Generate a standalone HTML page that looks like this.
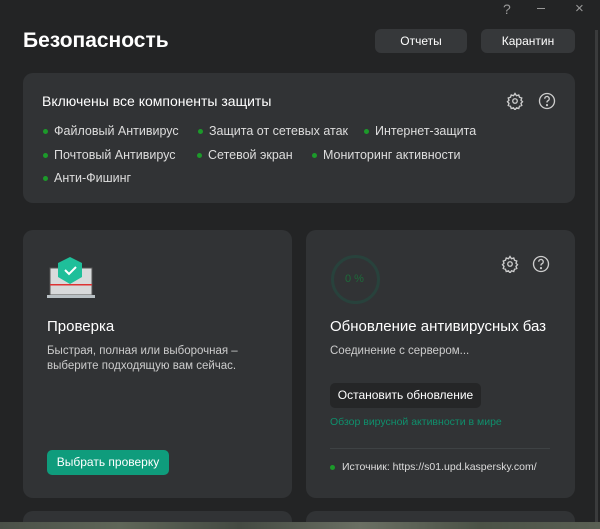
<!DOCTYPE html><html style="width:600px;height:529px;overflow:hidden"><head><meta charset="utf-8"><style>
body{margin:0;width:600px;height:529px;background:#232425;font-family:"Liberation Sans",sans-serif;color:#e8e8e8;position:relative;overflow:hidden}
.a{position:absolute}
.card{position:absolute;background:#313335;border-radius:10px}
.btn{position:absolute;background:#36383a;border-radius:6px;font-size:12px;color:#fff;text-align:center;line-height:24px}
.it{position:absolute;font-size:12.5px;color:#ddd}
.it:before{content:"";position:absolute;left:-11px;top:5px;width:5px;height:5px;border-radius:50%;background:#1c9a2a}
</style></head><body>
<div class="a" style="left:503px;top:1px;font-size:14px;color:#999">?</div>
<div class="a" style="left:537px;top:8px;width:8px;height:1px;background:#999"></div>
<div class="a" style="left:575px;top:0px;font-size:15px;color:#999">×</div>
<div class="a" style="left:595px;top:30px;width:3px;height:499px;background:#3a3b3c"></div>
<div class="a" style="left:23px;top:29px;font-size:21px;font-weight:bold;color:#fff">Безопасность</div>
<div class="btn" style="left:375px;top:29px;width:92px">Отчеты</div>
<div class="btn" style="left:481px;top:29px;width:94px">Карантин</div>
<div class="card" style="left:23px;top:73px;width:552px;height:130px"></div>
<div class="a" style="left:42px;top:93px;font-size:14px;color:#fff">Включены все компоненты защиты</div>
<svg class="a" style="left:506px;top:92px" width="18" height="18" viewBox="0 0 24 24" fill="none" stroke="#ccc" stroke-width="1.8"><circle cx="12" cy="12" r="3"/><path d="M12 2l2 3 3-1 1 3 3 1-1 3 2 2-2 2 1 3-3 1-1 3-3-1-2 3-2-3-3 1-1-3-3-1 1-3-2-2 2-2-1-3 3-1 1-3 3 1z"/></svg>
<svg class="a" style="left:538px;top:92px" width="18" height="18" viewBox="0 0 24 24" fill="none" stroke="#ccc" stroke-width="1.8"><circle cx="12" cy="12" r="10"/><path d="M9 9a3 3 0 1 1 4 2.8c-1 .4-1 1.2-1 2.2"/><circle cx="12" cy="17.5" r=".6" fill="#ccc"/></svg>
<div class="it" style="left:54px;top:124px">Файловый Антивирус</div>
<div class="it" style="left:209px;top:124px">Защита от сетевых атак</div>
<div class="it" style="left:375px;top:124px">Интернет-защита</div>
<div class="it" style="left:54px;top:148px">Почтовый Антивирус</div>
<div class="it" style="left:208px;top:148px">Сетевой экран</div>
<div class="it" style="left:323px;top:148px">Мониторинг активности</div>
<div class="it" style="left:54px;top:171px">Анти-Фишинг</div>

<div class="card" style="left:23px;top:230px;width:269px;height:268px"></div>
<svg class="a" style="left:45px;top:253px" width="55" height="50" viewBox="0 0 55 50"><rect x="5" y="15" width="42" height="27" fill="#d8dadb" stroke="#555" stroke-width="1"/><rect x="2" y="42" width="48" height="3" fill="#b8c0c4"/><rect x="5" y="31" width="42" height="1.5" fill="#d33"/><path d="M25 4l12 6v14l-12 7-12-7V10z" fill="#1fbf9a"/><path d="M20 17l4 4 7-7" stroke="#fff" stroke-width="2" fill="none"/></svg>
<div class="a" style="left:47px;top:318px;font-size:15px;color:#fff">Проверка</div>
<div class="a" style="left:47px;top:344px;font-size:11.5px;line-height:15px;color:#ccc">Быстрая, полная или выборочная –<br>выберите подходящую вам сейчас.</div>
<div class="a" style="left:47px;top:450px;width:122px;height:25px;background:#0f9c7c;border-radius:5px;color:#fff;font-size:12px;line-height:25px;text-align:center">Выбрать проверку</div>

<div class="card" style="left:306px;top:230px;width:269px;height:268px"></div>
<div class="a" style="left:331px;top:255px;width:43px;height:43px;border:3px solid #28423c;border-radius:50%"></div>
<div class="a" style="left:345px;top:273px;font-size:11px;color:#1d6b3a">0 %</div>
<svg class="a" style="left:501px;top:255px" width="18" height="18" viewBox="0 0 24 24" fill="none" stroke="#ccc" stroke-width="1.8"><circle cx="12" cy="12" r="3"/><path d="M12 2l2 3 3-1 1 3 3 1-1 3 2 2-2 2 1 3-3 1-1 3-3-1-2 3-2-3-3 1-1-3-3-1 1-3-2-2 2-2-1-3 3-1 1-3 3 1z"/></svg>
<svg class="a" style="left:532px;top:255px" width="18" height="18" viewBox="0 0 24 24" fill="none" stroke="#ccc" stroke-width="1.8"><circle cx="12" cy="12" r="10"/><path d="M9 9a3 3 0 1 1 4 2.8c-1 .4-1 1.2-1 2.2"/><circle cx="12" cy="17.5" r=".6" fill="#ccc"/></svg>
<div class="a" style="left:330px;top:318px;font-size:15px;color:#fff">Обновление антивирусных баз</div>
<div class="a" style="left:330px;top:345px;font-size:11.5px;color:#ccc">Соединение с сервером...</div>
<div class="a" style="left:330px;top:383px;width:151px;height:25px;background:#252627;border-radius:5px;color:#fff;font-size:12px;line-height:25px;text-align:center">Остановить обновление</div>
<div class="a" style="left:330px;top:416px;font-size:10.5px;color:#0f8f6c">Обзор вирусной активности в мире</div>
<div class="a" style="left:330px;top:448px;width:220px;height:1px;background:#3e4244"></div>
<div class="a" style="left:330px;top:465px;width:5px;height:5px;border-radius:50%;background:#1c9a2a"></div>
<div class="a" style="left:342px;top:461px;font-size:10.5px;color:#ddd">Источник: https://s01.upd.kaspersky.com/</div>

<div class="a" style="left:23px;top:511px;width:269px;height:11px;background:#313335;border-radius:10px 10px 0 0"></div>
<div class="a" style="left:306px;top:511px;width:269px;height:11px;background:#313335;border-radius:10px 10px 0 0"></div>
<div class="a" style="left:0;top:522px;width:600px;height:7px;background:linear-gradient(90deg,#4a5048,#5f6658,#444a42,#6a6f63,#4b5246,#5a6054)"></div>
</body></html>
